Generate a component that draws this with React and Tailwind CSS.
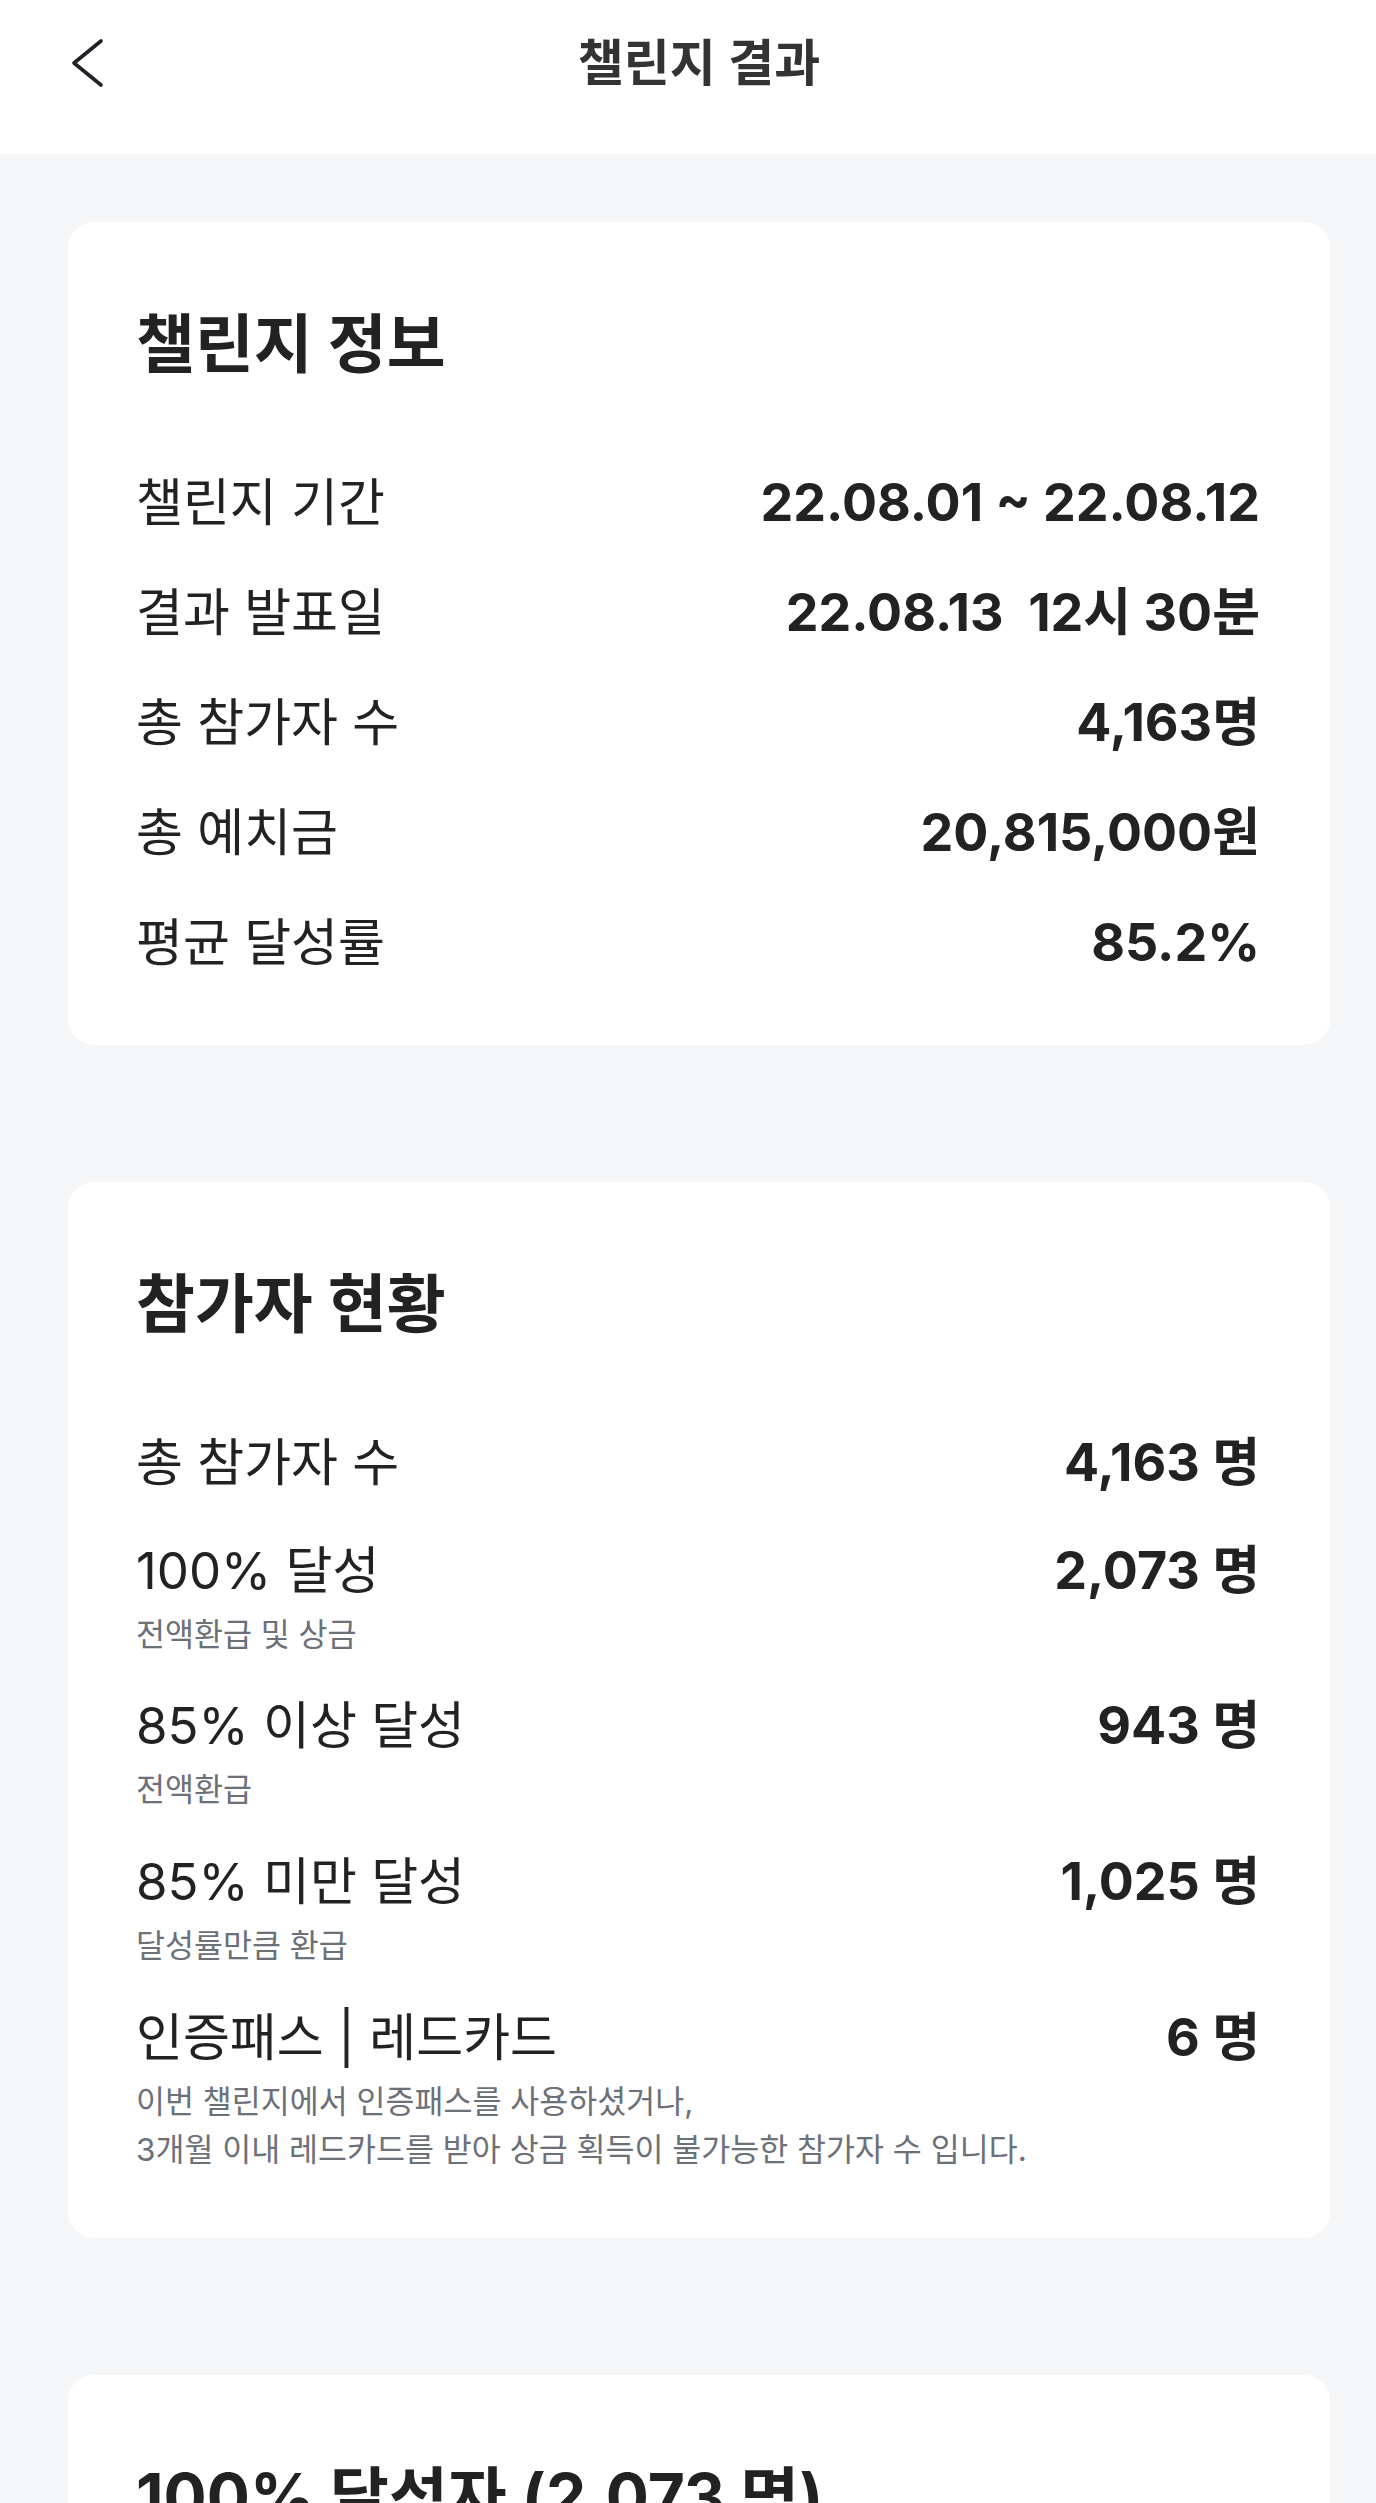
const infoRows = [
  { label: '챌린지 기간', value: '22.08.01 ~ 22.08.12' },
  { label: '결과 발표일', value: '22.08.13\u00a0\u00a012시 30분' },
  { label: '총 참가자 수', value: '4,163명' },
  { label: '총 예치금', value: '20,815,000원' },
  { label: '평균 달성률', value: '85.2%' },
];

const statusRows = [
  { label: '총 참가자 수', value: '4,163 명', gap: '' },
  { label: '100% 달성', value: '2,073 명', sub: ['전액환급 및 상금'], gap: 'mt-[48px]' },
  { label: '85% 이상 달성', value: '943 명', sub: ['전액환급'], gap: 'mt-[37px]' },
  { label: '85% 미만 달성', value: '1,025 명', sub: ['달성률만큼 환급'], gap: 'mt-[38px]' },
  {
    label: '인증패스 | 레드카드',
    value: '6 명',
    sub: [
      '이번 챌린지에서 인증패스를 사용하셨거나,',
      '3개월 이내 레드카드를 받아 상금 획득이 불가능한 참가자 수 입니다.',
    ],
    gap: 'mt-[38px]',
  },
];

function Card({ title, className, children }) {
  return (
    <section className={`bg-white rounded-[26px] pt-[80px] pl-[68px] pr-[70px] ${className}`}>
      <h2 className="text-[64px] leading-[84px] font-bold text-[#222] mb-[87px]">{title}</h2>
      {children}
    </section>
  );
}

function App() {
  return (
    <div
      className="min-h-screen bg-[#f5f6f8] overflow-hidden"
      style={{ fontFamily: '"Inter", "Noto Sans CJK KR", sans-serif' }}
    >
      <div className="w-[1398px]">
        <header className="h-[154px] bg-white">
          <div className="relative h-[126px] flex items-center justify-center">
            {/* back */}
            <button className="absolute left-[71px] top-[38px] text-[#1f2328]">
              <svg width="34" height="50" viewBox="0 0 34 50" fill="none">
                <path
                  d="M30 3 L3 25 L30 47"
                  stroke="currentColor"
                  strokeWidth="3.6"
                  strokeLinecap="round"
                  strokeLinejoin="round"
                />
              </svg>
            </button>
            <h1 className="text-[50px] font-semibold text-[#333]">챌린지 결과</h1>
          </div>
        </header>

        <main className="px-[68px] pt-[68px] flex flex-col gap-[137px]">
          <Card title="챌린지 정보" className="pb-[72px]">
            <div className="flex flex-col gap-[50px]">
              {infoRows.map((row) => (
                <div key={row.label} className="flex justify-between items-center h-[60px]">
                  <span className="text-[51px] leading-[60px] text-[#222]">{row.label}</span>
                  <span className="text-[52px] leading-[60px] font-bold text-[#222]">{row.value}</span>
                </div>
              ))}
            </div>
          </Card>

          <Card title="참가자 현황" className="pb-[64px]">
            <div className="flex flex-col">
              {statusRows.map((row) => (
                <div key={row.label} className={`flex justify-between items-start ${row.gap}`}>
                  <div className="flex flex-col">
                    <span className="text-[51px] leading-[60px] text-[#222]">{row.label}</span>
                    {row.sub && (
                      <div className="mt-[10px]">
                        {row.sub.map((line) => (
                          <p key={line} className="text-[31.5px] leading-[48px] text-[#6b7079]">
                            {line}
                          </p>
                        ))}
                      </div>
                    )}
                  </div>
                  <span className="text-[52px] leading-[60px] font-bold text-[#222]">{row.value}</span>
                </div>
              ))}
            </div>
          </Card>

          <Card title="100% 달성자 (2,073 명)" className="pb-[80px]">
            <div className="h-[400px]" />
          </Card>
        </main>
      </div>
    </div>
  );
}

export default App;
